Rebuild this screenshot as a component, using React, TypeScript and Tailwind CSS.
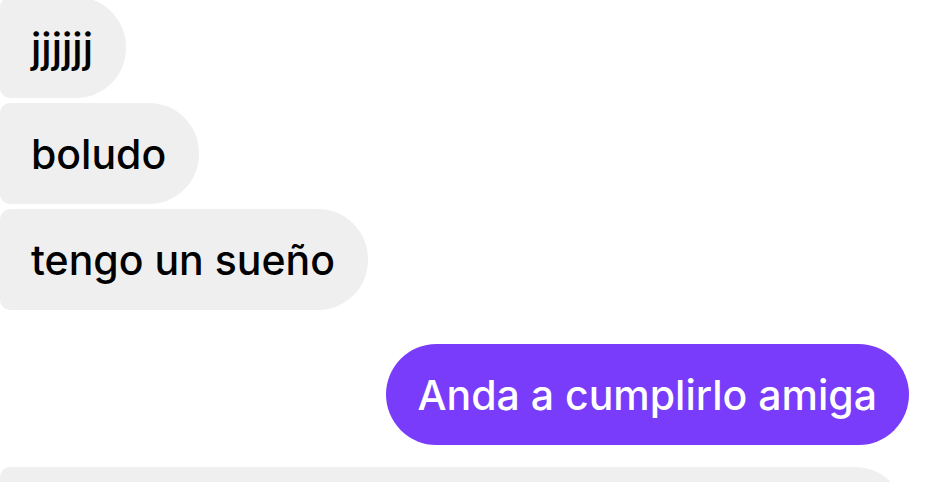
import React from 'react';

const received = ['jjjjjj', 'boludo', 'tengo un sueño'];

export default function App() {
  return (
    <div
      className="w-[931px] h-[482px] overflow-hidden bg-white"
      style={{ fontFamily: 'Inter, "Noto Sans", sans-serif' }}
    >
      <div className="flex flex-col items-start gap-[5px] mt-[-3px]">
        {received.map((msg) => (
          <div
            key={msg}
            className="h-[101px] flex items-center pl-[31px] pr-[33px] pt-[3px] bg-[#efefef] text-black text-[41px] font-medium rounded-l-[10px] rounded-r-[50px]"
          >
            {msg}
          </div>
        ))}
      </div>

      <div className="flex justify-end pr-[22px] mt-[34px]">
        <div className="h-[101px] flex items-center px-[32px] pt-[2px] bg-[#783cfa] text-white text-[41px] font-medium rounded-[51px]">
          Anda a cumplirlo amiga
        </div>
      </div>

      <div className="mt-[22px] w-[905px] h-[101px] bg-[#efefef] rounded-l-[10px] rounded-r-[50px]" />
    </div>
  );
}
